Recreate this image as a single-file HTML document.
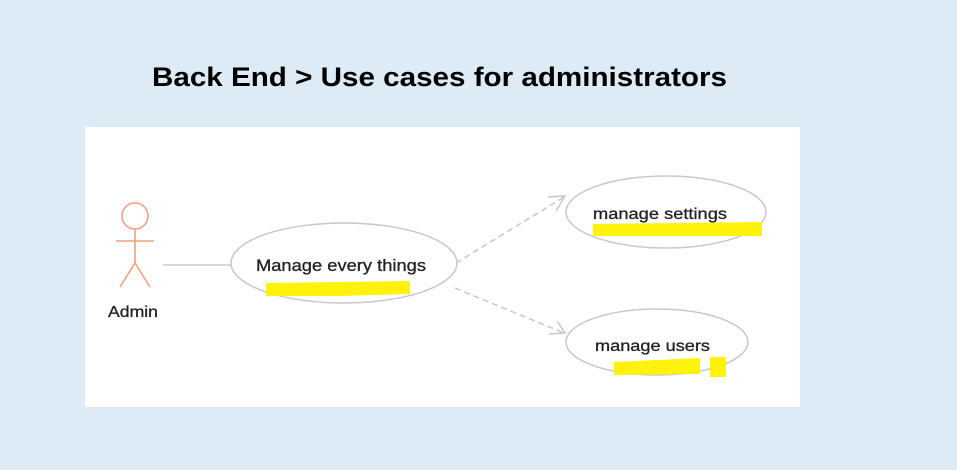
<!DOCTYPE html>
<html><head><meta charset="utf-8"><style>
html,body{margin:0;padding:0;background:#dcebf6;width:957px;height:470px;overflow:hidden}
svg{display:block}
</style></head><body>
<svg width="957" height="470" xmlns="http://www.w3.org/2000/svg">
<rect width="957" height="470" fill="#dcebf6"/>
<text x="152" y="86" font-family="Liberation Sans, sans-serif" font-weight="bold" font-size="27" fill="#000" textLength="575" lengthAdjust="spacingAndGlyphs">Back End &gt; Use cases for administrators</text>
<rect x="85" y="127" width="715" height="280" fill="#fff"/>
<g stroke="#f4a07c" stroke-width="1.6" fill="none">
<circle cx="135" cy="216" r="13"/>
<line x1="135" y1="229" x2="135" y2="263"/>
<line x1="116" y1="241" x2="154" y2="241"/>
<line x1="135" y1="263" x2="120" y2="287"/>
<line x1="135" y1="263" x2="150" y2="287"/>
</g>
<g font-family="Liberation Sans, sans-serif" fill="#222" stroke="#222" stroke-width="0.3">
<text x="108" y="317" font-size="16" textLength="50" lengthAdjust="spacingAndGlyphs">Admin</text>
<text x="256" y="271" font-size="16.5" textLength="170" lengthAdjust="spacingAndGlyphs">Manage every things</text>
<text x="593" y="219" font-size="16" textLength="134" lengthAdjust="spacingAndGlyphs">manage settings</text>
<text x="595" y="351" font-size="16" textLength="115" lengthAdjust="spacingAndGlyphs">manage users</text>
</g>
<line x1="163" y1="265" x2="231" y2="265" stroke="#c8c8c8" stroke-width="1.5"/>
<g fill="none" stroke="#c8c8c8" stroke-width="1.5">
<ellipse cx="344" cy="263" rx="113" ry="40"/>
<ellipse cx="666" cy="212" rx="100" ry="36"/>
<ellipse cx="657" cy="342" rx="91" ry="33"/>
<line x1="456" y1="263" x2="564" y2="197" stroke-dasharray="6,4"/>
<line x1="455" y1="288" x2="564" y2="333" stroke-dasharray="6,4"/>
<polyline points="548,197 565,196 556,211"/>
<polyline points="557,321 565,333 549,334"/>
</g>
<g fill="#fff200" opacity="0.95">
<path d="M266,283 L410,281 L410,294 L340,296 L266,296 Z"/>
<path d="M593,224 L762,222 L762,236 L593,236 Z"/>
<path d="M614,362 L700,358 L700,374 L614,375 Z"/>
<rect x="710" y="357" width="16" height="20"/>
</g>
</svg>
</body></html>
